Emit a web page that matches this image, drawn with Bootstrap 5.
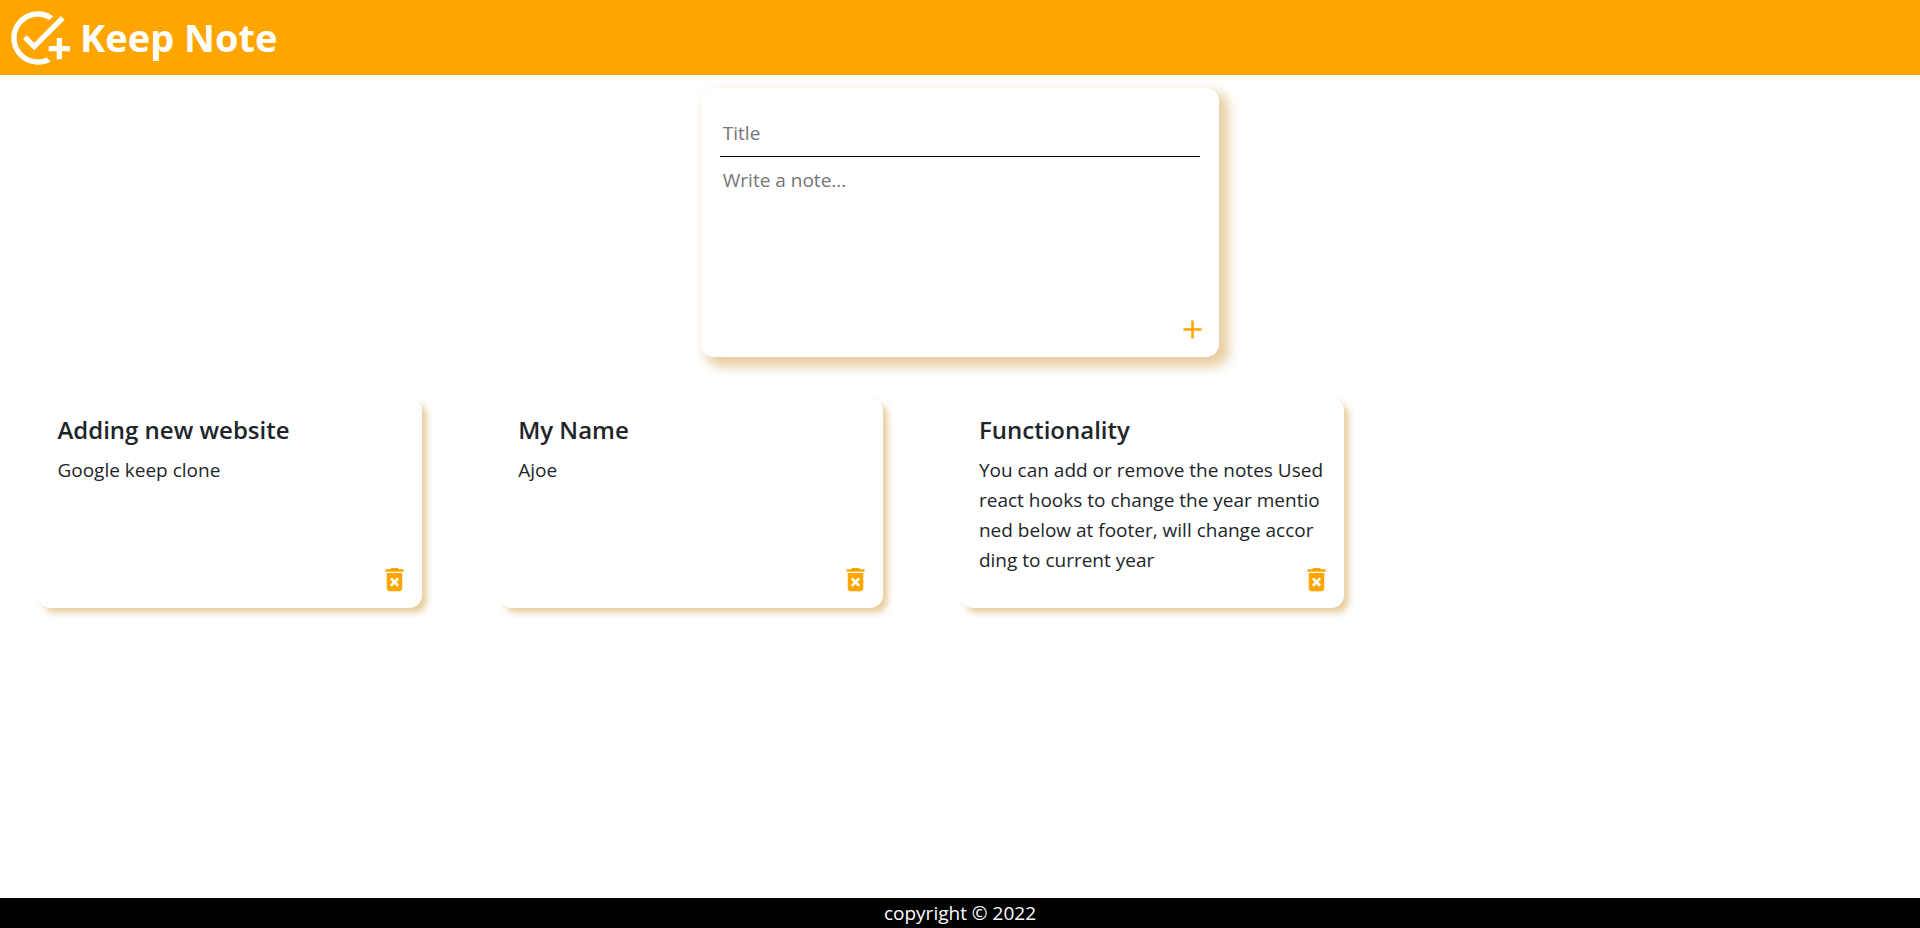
<!DOCTYPE html>
<html lang="en">
<head>
<meta charset="utf-8">
<meta name="viewport" content="width=device-width, initial-scale=1">
<title>Keep Note</title>
<link href="https://cdn.jsdelivr.net/npm/bootstrap@5.3.0/dist/css/bootstrap.min.css" rel="stylesheet">
<style>
  body { font-family: "Open Sans", "Noto Sans", sans-serif; font-size: 19px; line-height: 30px; }
  .site-header { background: orange; height: 75px; padding: 0 6px; }
  .site-title { font-size: 38px; font-weight: 700; line-height: 48px; padding-bottom: 2px; margin-left: 10px; }
  .note-form { width: 27%; min-width: 300px; margin-top: 13px; padding: 20px 19px 12px; border-radius: 13px;
    background: #fff; box-shadow: 7px 7px 12px 3px #e8cfa4; }
  .note-form input, .note-form textarea { border: 0; outline: 0; background: none; padding: 2px 3px; width: 100%; resize: none; }
  .note-form input { height: 49px; padding-top: 4px; border-bottom: 1px solid #000; }
  .note-form textarea { height: 157px; padding-top: 8px; }
  .note-form ::placeholder { color: #757575; }
  .icon-btn { border: 0; background: none; padding: 0; color: orange; line-height: 0; }
  .note-form .icon-btn { margin-right: -8px; }
  .note-item { width: 20%; height: 210px; margin: 0 2%; padding: 17px 19px 0; border-radius: 13px;
    background: #fff; box-shadow: 5px 5px 6px #e8cfa0; word-break: break-all; }
  .note-item h2 { font-size: 24px; font-weight: 600; line-height: 30px; margin: 0 0 10px; }
  .note-item .icon-btn { right: 12px; bottom: 13px; }
  .notes { padding-top: 41px; }
</style>
</head>
<body class="d-flex flex-column min-vh-100">
  <header class="site-header d-flex align-items-center text-white">
    <svg width="64" height="64" viewBox="0 0 24 24" fill="currentColor" aria-hidden="true"><path d="M22 5.18 10.59 16.6l-4.24-4.24 1.41-1.41 2.83 2.83 10-10L22 5.18zM12 20c-4.41 0-8-3.59-8-8s3.59-8 8-8c1.57 0 3.04.46 4.28 1.25l1.45-1.45A10.02 10.02 0 0 0 12 2C6.48 2 2 6.48 2 12s4.48 10 10 10c1.73 0 3.36-.44 4.78-1.22l-1.5-1.5c-1 .46-2.11.72-3.28.72zm7-5h-3v2h3v3h2v-3h3v-2h-3v-3h-2v3z"/></svg>
    <h1 class="site-title mb-0">Keep Note</h1>
  </header>
  <main class="flex-grow-1">
    <form class="note-form mx-auto d-flex flex-column">
      <input type="text" placeholder="Title" aria-label="Title">
      <textarea placeholder="Write a note..." aria-label="Write a note"></textarea>
      <button type="button" class="icon-btn align-self-end" aria-label="Add note"><svg width="31" height="31" viewBox="0 0 24 24" fill="currentColor"><path d="M19 13h-6v6h-2v-6H5v-2h6V5h2v6h6v2z"/></svg></button>
    </form>
    <section class="notes d-flex flex-wrap">
      <article class="note-item position-relative">
        <h2>Adding new website</h2>
        <p class="mb-0">Google keep clone</p>
        <button type="button" class="icon-btn position-absolute" aria-label="Delete note"><svg width="31" height="31" viewBox="0 0 24 24" fill="currentColor"><path d="M6 19c0 1.100.9 2 2 2h8c1.100 0 2-.9 2-2V7H6v12zm2.460-7.120 1.410-1.410L12 12.590l2.120-2.120 1.410 1.410L13.410 14l2.120 2.120-1.410 1.410L12 15.410l-2.120 2.120-1.410-1.410L10.590 14l-2.130-2.120zM15.500 4l-1-1h-5l-1 1H5v2h14V4z"/></svg></button>
      </article>
      <article class="note-item position-relative">
        <h2>My Name</h2>
        <p class="mb-0">Ajoe</p>
        <button type="button" class="icon-btn position-absolute" aria-label="Delete note"><svg width="31" height="31" viewBox="0 0 24 24" fill="currentColor"><path d="M6 19c0 1.100.9 2 2 2h8c1.100 0 2-.9 2-2V7H6v12zm2.460-7.120 1.410-1.410L12 12.590l2.120-2.120 1.410 1.410L13.410 14l2.120 2.120-1.410 1.410L12 15.410l-2.120 2.120-1.410-1.410L10.590 14l-2.130-2.120zM15.500 4l-1-1h-5l-1 1H5v2h14V4z"/></svg></button>
      </article>
      <article class="note-item position-relative">
        <h2>Functionality</h2>
        <p class="mb-0">You can add or remove the notes Used react hooks to change the year mentioned below at footer, will change according to current year</p>
        <button type="button" class="icon-btn position-absolute" aria-label="Delete note"><svg width="31" height="31" viewBox="0 0 24 24" fill="currentColor"><path d="M6 19c0 1.100.9 2 2 2h8c1.100 0 2-.9 2-2V7H6v12zm2.460-7.120 1.410-1.410L12 12.590l2.120-2.120 1.410 1.410L13.410 14l2.120 2.120-1.410 1.410L12 15.410l-2.120 2.120-1.410-1.410L10.590 14l-2.130-2.120zM15.500 4l-1-1h-5l-1 1H5v2h14V4z"/></svg></button>
      </article>
    </section>
  </main>
  <footer class="bg-black text-white text-center">copyright © 2022</footer>
  <script src="https://cdn.jsdelivr.net/npm/bootstrap@5.3.0/dist/js/bootstrap.bundle.min.js"></script>
</body>
</html>
